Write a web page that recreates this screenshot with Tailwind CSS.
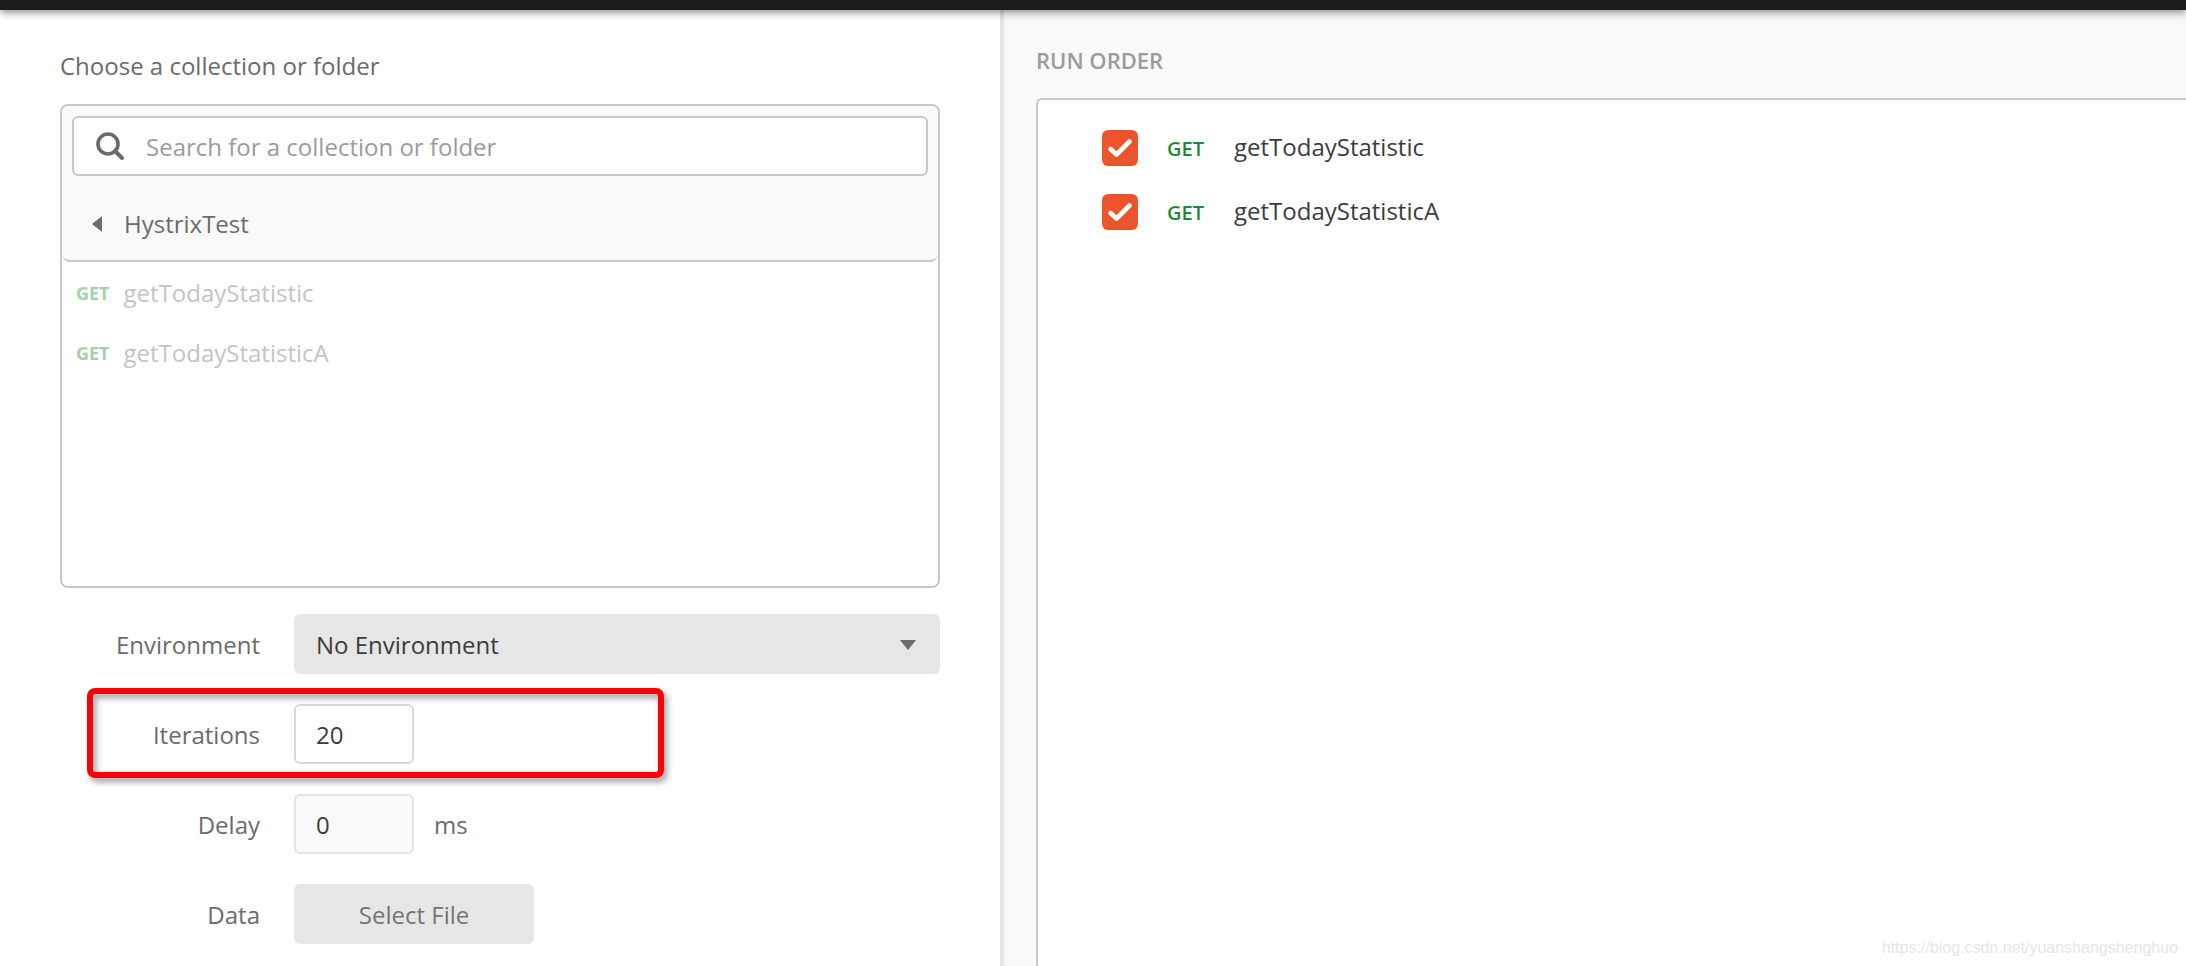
<!DOCTYPE html>
<html lang="en">

<head>
  <meta charset="UTF-8">
  <meta name="viewport" content="width=device-width, initial-scale=1.0">
  <title>Collection Runner</title>
  <script src="https://cdn.jsdelivr.net/npm/@tailwindcss/browser@4"></script>
</head>

<body class="flex min-h-screen flex-col bg-white font-['Open_Sans',sans-serif] text-2xl text-[#6b6b6b]">
  <!-- top bar -->
  <header class="z-10 h-[10px] bg-[#1c1c1c] shadow-[0_2px_8px_rgba(0,0,0,0.5)]"></header>

  <main class="grid flex-1 grid-cols-[1004fr_1182fr]">

    <!-- left: runner settings -->
    <section class="border-r-4 border-[#e4e4e4] px-[60px] pt-[38px]">
      <h1 class="mb-5 leading-9">Choose a collection or folder</h1>

      <div class="h-[484px] rounded-lg border-2 border-[#c8c8c8]">
        <div class="rounded-lg border-b-2 border-[#c8c8c8] bg-[#f9f9f9] p-[10px] pb-0">
          <label class="flex h-[60px] items-center rounded-md border-2 border-[#c8c8c8] bg-white pr-4 pl-[22px]">
            <svg class="mr-[22px] size-7 shrink-0" viewBox="0 0 28 28" fill="none" stroke="#6b6b6b" stroke-linecap="round">
              <circle cx="12" cy="12" r="10" stroke-width="3.6" />
              <path d="M19 19l7 7" stroke-width="4" />
            </svg>
            <input type="text" aria-label="Search" placeholder="Search for a collection or folder" class="min-w-0 flex-1 pt-0.5 outline-none placeholder:text-[#9b9b9b]">
          </label>
          <button type="button" class="flex h-[84px] w-full items-center gap-[22px] pt-3 pl-5">
            <svg class="h-4 w-[10px]" viewBox="0 0 10 16" fill="#6b6b6b"><path d="M10 0v16L0 8z" /></svg>
            HystrixTest
          </button>
        </div>
        <ul class="pl-[14px] text-[#c4c4c4]">
          <li class="flex h-[60px] items-center gap-[14px] pt-0.5"><span class="text-lg font-bold text-[#a5d0ae]">GET</span>getTodayStatistic</li>
          <li class="flex h-[60px] items-center gap-[14px] pt-0.5"><span class="text-lg font-bold text-[#a5d0ae]">GET</span>getTodayStatisticA</li>
        </ul>
      </div>

      <form class="mt-[26px] flex flex-col gap-[30px]">
        <div class="flex items-center gap-[34px]">
          <label for="environment" class="w-[200px] pt-0.5 text-right">Environment</label>
          <div class="relative flex-1">
            <select id="environment" class="h-[60px] w-full appearance-none rounded-md bg-[#e6e6e6] px-[22px] pt-0.5 text-[#3c3c3c]">
              <option>No Environment</option>
            </select>
            <svg class="pointer-events-none absolute top-[26px] right-6 h-[10px] w-4" viewBox="0 0 16 10" fill="#6b6b6b"><path d="M0 0h16L8 10z" /></svg>
          </div>
        </div>

        <div class="relative flex items-center gap-[34px]">
          <label for="iterations" class="w-[200px] pt-0.5 text-right">Iterations</label>
          <input type="text" id="iterations" value="20" class="h-[60px] w-[120px] rounded-md border-2 border-[#d9d9d9] bg-white px-5 text-[#3c3c3c]">
          <!-- highlight -->
          <div class="pointer-events-none absolute -top-4 -bottom-[14px] left-[27px] w-[577px] rounded-lg border-6 border-[#fb0007] drop-shadow-[3px_4px_3px_rgba(0,0,0,0.4)]"></div>
        </div>

        <div class="flex items-center gap-[34px]">
          <label for="delay" class="w-[200px] pt-0.5 text-right">Delay</label>
          <div class="flex items-center gap-5">
            <input type="text" id="delay" value="0" class="h-[60px] w-[120px] rounded-md border-2 border-[#e4e4e4] bg-[#f9f9f9] px-5 text-[#3c3c3c]">
            <span class="pt-0.5">ms</span>
          </div>
        </div>

        <div class="flex items-center gap-[34px]">
          <label for="data" class="w-[200px] pt-0.5 text-right">Data</label>
          <button type="button" id="data" class="h-[60px] w-[240px] rounded-md bg-[#e6e6e6] pt-0.5 text-[#747474]">Select File</button>
        </div>
      </form>
    </section>

    <!-- right: run order -->
    <section class="flex flex-col bg-[#f9f9f9] pt-[34px] pl-8">
      <h2 class="mb-[22px] text-[22px] leading-8 font-semibold text-[#9b9b9b]">RUN ORDER</h2>
      <div class="relative flex-1 rounded-tl-md border-t-2 border-l-2 border-[#c8c8c8] bg-white pt-[30px] pl-16">
        <ul class="flex flex-col gap-7 text-[#3c3c3c]">
          <li>
            <label class="flex h-9 items-center">
              <span class="mr-[29px] grid size-9">
                <input type="checkbox" checked class="col-start-1 row-start-1 appearance-none rounded-md bg-[#ec552c]">
                <svg class="pointer-events-none col-start-1 row-start-1 size-9" viewBox="0 0 36 36" fill="none" stroke="white" stroke-width="4.6" stroke-linecap="round" stroke-linejoin="round"><path d="M8.5 19l6 5.5L27.5 11.5" /></svg>
              </span>
              <span class="w-[67px] pt-0.5 text-xl font-semibold text-[#1f8a37]">GET</span>
              <span class="pb-0.5">getTodayStatistic</span>
            </label>
          </li>
          <li>
            <label class="flex h-9 items-center">
              <span class="mr-[29px] grid size-9">
                <input type="checkbox" checked class="col-start-1 row-start-1 appearance-none rounded-md bg-[#ec552c]">
                <svg class="pointer-events-none col-start-1 row-start-1 size-9" viewBox="0 0 36 36" fill="none" stroke="white" stroke-width="4.6" stroke-linecap="round" stroke-linejoin="round"><path d="M8.5 19l6 5.5L27.5 11.5" /></svg>
              </span>
              <span class="w-[67px] pt-0.5 text-xl font-semibold text-[#1f8a37]">GET</span>
              <span class="pb-0.5">getTodayStatisticA</span>
            </label>
          </li>
        </ul>
        <p class="absolute right-2 bottom-1.5 font-['Liberation_Sans',sans-serif] text-base text-[#e6e6e6]">https://blog.csdn.net/yuanshangshenghuo</p>
      </div>
    </section>

  </main>
</body>

</html>
